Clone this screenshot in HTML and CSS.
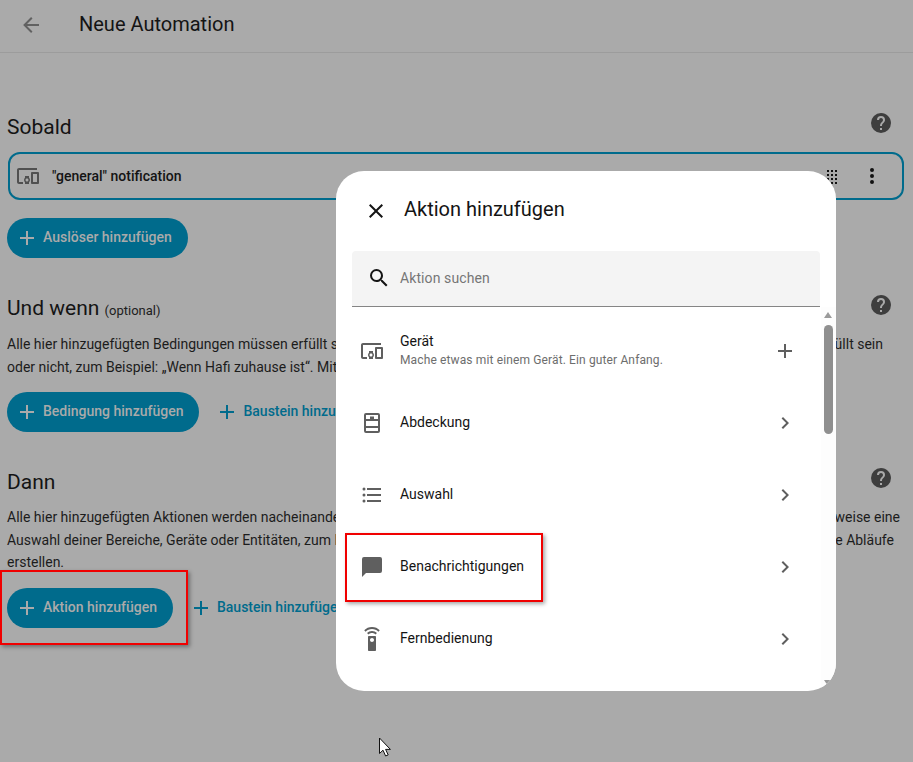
FILE: index.html
```html
<!DOCTYPE html>
<html lang="de">
<head>
<meta charset="utf-8">
<title>Neue Automation</title>
<link rel="stylesheet" href="styles.css">
</head>
<body>
<header class="topbar">
  <svg class="icon back" viewBox="0 0 24 24"><path d="M20,11V13H8L13.5,18.5L12.08,19.92L4.16,12L12.08,4.08L13.5,5.5L8,11H20Z"/></svg>
  <div class="page-title">Neue Automation</div>
</header>
<main class="content">
  <section class="block block-first">
    <div class="block-head">
      <h2>Sobald</h2>
      <svg class="icon help" viewBox="0 0 24 24"><path d="M15.07,11.25L14.17,12.17C13.45,12.89 13,13.5 13,15H11V14.5C11,13.39 11.45,12.39 12.17,11.67L13.41,10.41C13.78,10.05 14,9.55 14,9C14,7.89 13.1,7 12,7A2,2 0 0,0 10,9H8A4,4 0 0,1 12,5A4,4 0 0,1 16,9C16,9.88 15.64,10.67 15.07,11.25M13,19H11V17H13M12,2A10,10 0 0,0 2,12A10,10 0 0,0 12,22A10,10 0 0,0 22,12C22,6.47 17.5,2 12,2Z"/></svg>
    </div>
    <div class="trigger-card">
      <svg class="icon card-icon" viewBox="0 0 24 24"><path d="M3 6H21V4H3C1.9 4 1 4.9 1 6V18C1 19.1 1.9 20 3 20H7V18H3V6M13 12H9V13.78C8.39 14.33 8 15.11 8 16C8 16.89 8.39 17.67 9 18.22V20H13V18.22C13.61 17.67 14 16.88 14 16S13.61 14.33 13 13.78V12M11 17.5C10.17 17.5 9.5 16.83 9.5 16S10.17 14.5 11 14.5 12.5 15.17 12.5 16 11.83 17.5 11 17.5M22 8H16C15.5 8 15 8.5 15 9V19C15 19.5 15.5 20 16 20H22C22.5 20 23 19.5 23 19V9C23 8.5 22.5 8 22 8M21 18H17V10H21V18Z"/></svg>
      <span class="card-label">"general" notification</span>
      <svg class="drag" viewBox="0 0 12 16">
        <rect x="1" y="1" width="2" height="2"/><rect x="5" y="1" width="2" height="2"/><rect x="9" y="1" width="2" height="2"/>
        <rect x="1" y="5" width="2" height="2"/><rect x="5" y="5" width="2" height="2"/><rect x="9" y="5" width="2" height="2"/>
        <rect x="1" y="9" width="2" height="2"/><rect x="5" y="9" width="2" height="2"/><rect x="9" y="9" width="2" height="2"/>
        <rect x="1" y="13" width="2" height="2"/><rect x="5" y="13" width="2" height="2"/><rect x="9" y="13" width="2" height="2"/>
      </svg>
      <svg class="icon more" viewBox="0 0 24 24"><path d="M12,16A2,2 0 0,1 14,18A2,2 0 0,1 12,20A2,2 0 0,1 10,18A2,2 0 0,1 12,16M12,10A2,2 0 0,1 14,12A2,2 0 0,1 12,14A2,2 0 0,1 10,12A2,2 0 0,1 12,10M12,4A2,2 0 0,1 14,6A2,2 0 0,1 12,8A2,2 0 0,1 10,6A2,2 0 0,1 12,4Z"/></svg>
    </div>
    <div class="actions">
      <div class="btn-fill"><svg class="icon" viewBox="0 0 24 24"><path d="M19,13H13V19H11V13H5V11H11V5H13V11H19V13Z"/></svg>Auslöser hinzufügen</div>
    </div>
  </section>

  <section class="block block-second">
    <div class="block-head">
      <h2>Und wenn <small>(optional)</small></h2>
      <svg class="icon help" viewBox="0 0 24 24"><path d="M15.07,11.25L14.17,12.17C13.45,12.89 13,13.5 13,15H11V14.5C11,13.39 11.45,12.39 12.17,11.67L13.41,10.41C13.78,10.05 14,9.55 14,9C14,7.89 13.1,7 12,7A2,2 0 0,0 10,9H8A4,4 0 0,1 12,5A4,4 0 0,1 16,9C16,9.88 15.64,10.67 15.07,11.25M13,19H11V17H13M12,2A10,10 0 0,0 2,12A10,10 0 0,0 12,22A10,10 0 0,0 22,12C22,6.47 17.5,2 12,2Z"/></svg>
    </div>
    <div class="desc">
      <div class="line end-a"><span>Alle hier hinzugefügten Bedingungen müssen erfüllt sein</span><span>erfüllt sein</span></div>
      <div class="line"><span>oder nicht, zum Beispiel: „Wenn Hafi zuhause ist“. Mit diesen</span></div>
    </div>
    <div class="actions">
      <div class="btn-fill"><svg class="icon" viewBox="0 0 24 24"><path d="M19,13H13V19H11V13H5V11H11V5H13V11H19V13Z"/></svg>Bedingung hinzufügen</div>
      <div class="btn-text"><svg class="icon" viewBox="0 0 24 24"><path d="M19,13H13V19H11V13H5V11H11V5H13V11H19V13Z"/></svg>Baustein hinzufügen</div>
    </div>
  </section>

  <section class="block block-third">
    <div class="block-head">
      <h2>Dann</h2>
      <svg class="icon help" viewBox="0 0 24 24"><path d="M15.07,11.25L14.17,12.17C13.45,12.89 13,13.5 13,15H11V14.5C11,13.39 11.45,12.39 12.17,11.67L13.41,10.41C13.78,10.05 14,9.55 14,9C14,7.89 13.1,7 12,7A2,2 0 0,0 10,9H8A4,4 0 0,1 12,5A4,4 0 0,1 16,9C16,9.88 15.64,10.67 15.07,11.25M13,19H11V17H13M12,2A10,10 0 0,0 2,12A10,10 0 0,0 12,22A10,10 0 0,0 22,12C22,6.47 17.5,2 12,2Z"/></svg>
    </div>
    <div class="desc">
      <div class="line end-b"><span>Alle hier hinzugefügten Aktionen werden nacheinander</span><span>beispielsweise eine</span></div>
      <div class="line end-c"><span>Auswahl deiner Bereiche, Geräte oder Entitäten, zum Beispiel</span><span>komplexe Abläufe</span></div>
      <div class="line"><span>erstellen.</span></div>
    </div>
    <div class="actions">
      <div class="btn-fill"><svg class="icon" viewBox="0 0 24 24"><path d="M19,13H13V19H11V13H5V11H11V5H13V11H19V13Z"/></svg>Aktion hinzufügen</div>
      <div class="btn-text"><svg class="icon" viewBox="0 0 24 24"><path d="M19,13H13V19H11V13H5V11H11V5H13V11H19V13Z"/></svg>Baustein hinzufügen</div>
    </div>
  </section>
</main>

<div class="mark mark-left"></div>

<aside class="dialog">
  <div class="dialog-head">
    <svg class="icon close" viewBox="0 0 24 24"><path d="M19,6.41L17.59,5L12,10.59L6.41,5L5,6.41L10.59,12L5,17.59L6.41,19L12,13.41L17.59,19L19,17.59L13.41,12L19,6.41Z"/></svg>
    <div class="dialog-title">Aktion hinzufügen</div>
  </div>
  <div class="search">
    <svg class="icon" viewBox="0 0 24 24"><path d="M9.5,3A6.5,6.5 0 0,1 16,9.5C16,11.11 15.41,12.59 14.44,13.73L14.71,14H15.5L20.5,19L19,20.5L14,15.5V14.71L13.73,14.44C12.59,15.41 11.11,16 9.5,16A6.5,6.5 0 0,1 3,9.5A6.5,6.5 0 0,1 9.5,3M9.5,5C7,5 5,7 5,9.5C5,12 7,14 9.5,14C12,14 14,12 14,9.5C14,7 12,5 9.5,5Z"/></svg>
    <span>Aktion suchen</span>
  </div>
  <div class="list-wrap">
    <ul class="list">
      <li class="row">
        <svg class="icon" viewBox="0 0 24 24"><path d="M3 6H21V4H3C1.9 4 1 4.9 1 6V18C1 19.1 1.9 20 3 20H7V18H3V6M13 12H9V13.78C8.39 14.33 8 15.11 8 16C8 16.89 8.39 17.67 9 18.22V20H13V18.22C13.61 17.67 14 16.88 14 16S13.61 14.33 13 13.78V12M11 17.5C10.17 17.5 9.5 16.83 9.5 16S10.17 14.5 11 14.5 12.5 15.17 12.5 16 11.83 17.5 11 17.5M22 8H16C15.5 8 15 8.5 15 9V19C15 19.5 15.5 20 16 20H22C22.5 20 23 19.5 23 19V9C23 8.5 22.5 8 22 8M21 18H17V10H21V18Z"/></svg>
        <div class="row-text"><div class="row-title">Gerät</div><div class="row-sub">Mache etwas mit einem Gerät. Ein guter Anfang.</div></div>
        <svg class="icon" viewBox="0 0 24 24"><path d="M19,13H13V19H11V13H5V11H11V5H13V11H19V13Z"/></svg>
      </li>
      <li class="row">
        <svg class="icon" viewBox="0 0 24 24"><path fill-rule="evenodd" d="M6 2H18A2 2 0 0 1 20 4V20A2 2 0 0 1 18 22H6A2 2 0 0 1 4 20V4A2 2 0 0 1 6 2ZM6 4V8H10V5.5H14V8H18V4ZM6 10V15H18V10ZM6 17V20H18V17Z"/></svg>
        <div class="row-text"><div class="row-title">Abdeckung</div></div>
        <svg class="icon" viewBox="0 0 24 24"><path d="M8.59,16.58L13.17,12L8.59,7.41L10,6L16,12L10,18L8.59,16.58Z"/></svg>
      </li>
      <li class="row">
        <svg class="icon" viewBox="0 0 24 24"><path d="M7,5H21V7H7V5M7,13V11H21V13H7M4,4.5A1.5,1.5 0 0,1 5.5,6A1.5,1.5 0 0,1 4,7.5A1.5,1.5 0 0,1 2.5,6A1.5,1.5 0 0,1 4,4.5M4,10.5A1.5,1.5 0 0,1 5.5,12A1.5,1.5 0 0,1 4,13.5A1.5,1.5 0 0,1 2.5,12A1.5,1.5 0 0,1 4,10.5M7,19V17H21V19H7M4,16.5A1.5,1.5 0 0,1 5.5,18A1.5,1.5 0 0,1 4,19.5A1.5,1.5 0 0,1 2.5,18A1.5,1.5 0 0,1 4,16.5Z"/></svg>
        <div class="row-text"><div class="row-title">Auswahl</div></div>
        <svg class="icon" viewBox="0 0 24 24"><path d="M8.59,16.58L13.17,12L8.59,7.41L10,6L16,12L10,18L8.59,16.58Z"/></svg>
      </li>
      <li class="row">
        <svg class="icon" viewBox="0 0 24 24"><path d="M20,2H4A2,2 0 0,0 2,4V22L6,18H20A2,2 0 0,0 22,16V4A2,2 0 0,0 20,2Z"/></svg>
        <div class="row-text"><div class="row-title">Benachrichtigungen</div></div>
        <svg class="icon" viewBox="0 0 24 24"><path d="M8.59,16.58L13.17,12L8.59,7.41L10,6L16,12L10,18L8.59,16.58Z"/></svg>
      </li>
      <li class="row">
        <svg class="icon" viewBox="0 0 24 24"><path d="M12 0C8.96 0 6.21 1.23 4.22 3.22L5.63 4.63C7.26 3 9.5 2 12 2S16.74 3 18.37 4.63L19.78 3.22C17.79 1.23 15.04 0 12 0M7.05 6.05L8.46 7.46C9.37 6.56 10.62 6 12 6S14.63 6.56 15.54 7.46L16.95 6.05C15.68 4.78 13.93 4 12 4S8.32 4.78 7.05 6.05M15 9H9C8.45 9 8 9.45 8 10V23C8 23.55 8.45 24 9 24H15C15.55 24 16 23.55 16 23V10C16 9.45 15.55 9 15 9M12 15C10.9 15 10 14.1 10 13S10.9 11 12 11 14 11.9 14 13 13.1 15 12 15Z"/></svg>
        <div class="row-text"><div class="row-title">Fernbedienung</div></div>
        <svg class="icon" viewBox="0 0 24 24"><path d="M8.59,16.58L13.17,12L8.59,7.41L10,6L16,12L10,18L8.59,16.58Z"/></svg>
      </li>
    </ul>
    <div class="scrollbar">
      <span class="arrow-up"></span>
      <span class="thumb"></span>
      <span class="arrow-down"></span>
    </div>
  </div>
</aside>

<div class="mark mark-right"></div>

<svg class="cursor" viewBox="0 0 14 20"><path d="M1.5 1V16.5L5 13.2L7.6 19L10.2 17.9L7.6 12.4H12.4Z"/></svg>
</body>
</html>
```

FILE: styles.css
```css
* { box-sizing: border-box; }

html, body {
  margin: 0;
  height: 762px;
  overflow: hidden;
}

body {
  position: relative;
  background: #aaaaaa;
  color: #141414;
  font-family: Roboto, "Liberation Sans", sans-serif;
  font-size: 14px;
}

.icon {
  display: block;
  width: 24px;
  height: 24px;
  fill: #5f5f5f;
  flex: none;
}

/* Page header */
.topbar {
  display: flex;
  align-items: center;
  height: 53px;
  padding: 0 0 3px 19px;
  border-bottom: 1px solid #9c9c9c;
}

.back { fill: #616161; }

.page-title {
  margin: 0 0 2px 36px;
  font-size: 20px;
  line-height: 24px;
  color: #141414;
}

/* Page content */
.content { padding: 0 7px; }

.block-first { padding-top: 54px; }
.block-second { padding-top: 31px; }
.block-third { padding-top: 30px; }

.block-head {
  display: flex;
  align-items: center;
  justify-content: space-between;
  height: 42px;
  padding-right: 13px;
}

.block-head h2 {
  margin: 0 0 2px;
  font-size: 21px;
  font-weight: 400;
  line-height: 28px;
  color: #141414;
}

.block-head small {
  font-size: 13px;
  color: #202020;
}

.help { fill: #3e3e3e; margin-top: -10px; }

.trigger-card {
  display: flex;
  align-items: center;
  height: 48px;
  margin: 3px 2px 0 1px;
  padding: 0 18px 0 6px;
  border: 2px solid #006b8c;
  border-radius: 12px;
}

.card-icon { fill: #505050; }

.card-label {
  margin-left: 12px;
  font-weight: 500;
  flex: 1;
}

.drag {
  width: 12px;
  height: 16px;
  margin: 2px 22px 0 0;
  fill: #111;
}

.more { fill: #111; }

.desc {
  margin-top: 2px;
  line-height: 22.5px;
  color: #1c1c1c;
}

.line {
  display: flex;
  justify-content: space-between;
  white-space: nowrap;
}

.end-a { padding-right: 23px; }
.end-b { padding-right: 6px; }
.end-c { padding-right: 12px; }

.actions {
  display: flex;
  align-items: center;
  margin-top: 14px;
}

.block-first .actions { margin-top: 18px; }

.btn-fill {
  display: flex;
  align-items: center;
  height: 40px;
  padding: 0 16px 2px 8px;
  border-radius: 20px;
  background: #006b8c;
  color: #aaaaaa;
  font-weight: 500;
  white-space: nowrap;
}

.btn-fill .icon {
  fill: #aaaaaa;
  margin: 2px 4px 0 0;
}

.btn-text {
  display: flex;
  align-items: center;
  margin-left: 16px;
  padding-bottom: 2px;
  color: #006b8c;
  font-weight: 500;
  white-space: nowrap;
}

.btn-text .icon {
  fill: #006b8c;
  margin: 2px 4px 0 0;
}

/* Dialog */
.dialog {
  position: absolute;
  left: 336px;
  top: 171px;
  display: flex;
  flex-direction: column;
  width: 500px;
  height: 520px;
  background: #fff;
  border-radius: 28px;
  overflow: hidden;
}

.dialog-head {
  display: flex;
  align-items: center;
  height: 80px;
  flex: none;
  padding: 0 0 1px 28px;
}

.close { fill: #141414; }

.dialog-title {
  margin: 0 0 4px 16px;
  font-size: 20px;
  line-height: 24px;
  color: #141414;
}

.search {
  display: flex;
  align-items: center;
  height: 56px;
  flex: none;
  margin: 0 16px;
  padding: 0 0 2px 15px;
  background: #f4f4f4;
  border-bottom: 1px solid #858585;
  border-radius: 4px 4px 0 0;
  color: #767676;
}

.search .icon { fill: #141414; }
.search span { margin-left: 9px; letter-spacing: 0.1px; }

.list-wrap {
  position: relative;
  flex: 1;
  min-height: 0;
  overflow: hidden;
}

.list {
  margin: 0;
  padding: 7px 0 0;
  list-style: none;
}

.row {
  display: flex;
  align-items: center;
  height: 72px;
  padding: 0 39px 0 24px;
}

.row .icon { margin-top: 2px; }

.row-text {
  flex: 1;
  margin-left: 16px;
}

.row-title {
  color: #141414;
  line-height: 20px;
}

.row-sub {
  font-size: 12px;
  line-height: 18px;
  letter-spacing: 0.13px;
  color: #6d6d6d;
}

.scrollbar {
  position: absolute;
  top: 0;
  right: 0;
  bottom: 0;
  width: 15px;
  background: #fdfdfd;
}

.thumb {
  position: absolute;
  left: 3px;
  top: 18px;
  width: 9px;
  height: 109px;
  border-radius: 5px;
  background: #8f8f8f;
}

.arrow-up,
.arrow-down {
  position: absolute;
  left: 3px;
  width: 0;
  height: 0;
  border-left: 4.5px solid transparent;
  border-right: 4.5px solid transparent;
}

.arrow-up {
  top: 5px;
  border-bottom: 6px solid #9a9a9a;
}

.arrow-down {
  bottom: 5px;
  border-top: 6px solid #9a9a9a;
}

/* Red annotation boxes */
.mark {
  position: absolute;
  border: 2px solid #f00000;
  box-shadow: 2px 2px 4px rgba(0, 0, 0, 0.35);
  z-index: 2;
}

.mark-left {
  left: 0;
  top: 570px;
  width: 188px;
  height: 75px;
}

.mark-right {
  left: 345px;
  top: 533px;
  width: 198px;
  height: 69px;
}

.cursor {
  position: absolute;
  left: 378px;
  top: 737px;
  width: 14px;
  height: 20px;
  fill: #fff;
  stroke: #111;
  stroke-width: 1;
  z-index: 3;
}
```
